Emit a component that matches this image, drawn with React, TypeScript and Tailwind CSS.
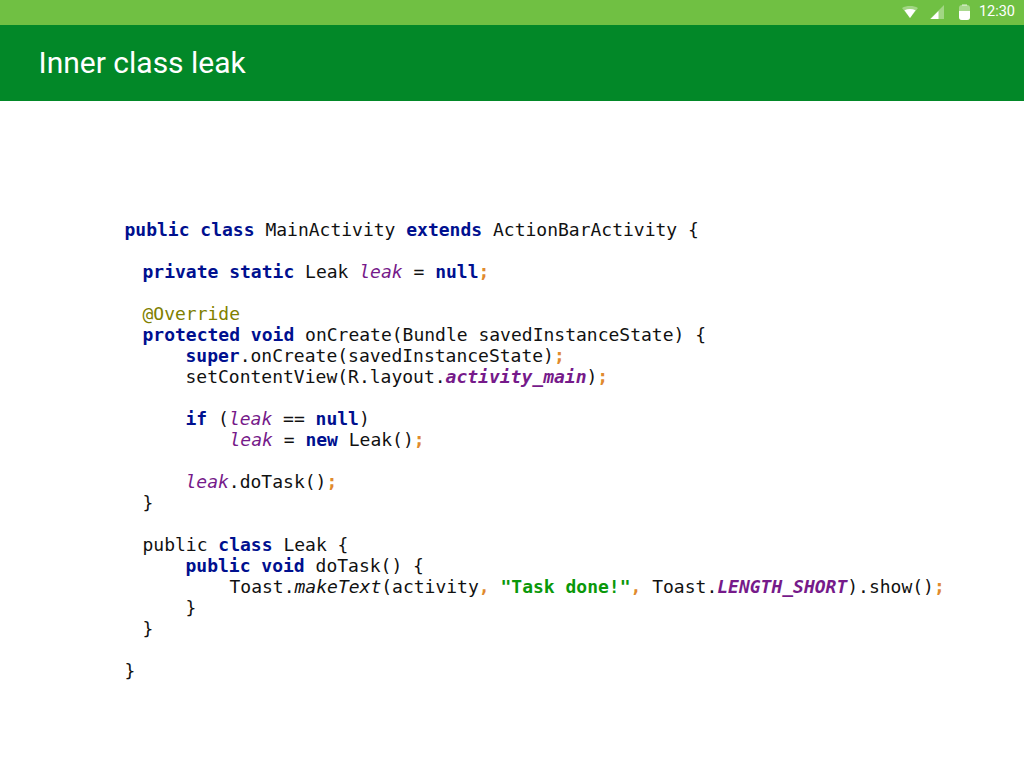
import React from "react";

type Kind = "k" | "p" | "f" | "fb" | "a" | "s" | "m" | "t";
type Seg = [string, Kind?];

const cls: Record<Kind, string> = {
  t: "text-[#111111]",
  k: "font-bold text-[#00108f]",
  p: "font-bold text-[#e08a2e]",
  f: "italic text-[#761a8a]",
  fb: "italic font-bold text-[#761a8a]",
  a: "text-[#808000]",
  s: "font-bold text-[#0a980a]",
  m: "italic text-[#111111]",
};

const lines: { indent: string; segs: Seg[] }[] = [
  { indent: "pl-0", segs: [["public class", "k"], [" MainActivity "], ["extends", "k"], [" ActionBarActivity {"]] },
  { indent: "pl-0", segs: [] },
  { indent: "pl-[18px]", segs: [["private static", "k"], [" Leak "], ["leak", "f"], [" = "], ["null", "k"], [";", "p"]] },
  { indent: "pl-0", segs: [] },
  { indent: "pl-[18px]", segs: [["@Override", "a"]] },
  { indent: "pl-[18px]", segs: [["protected void", "k"], [" onCreate(Bundle savedInstanceState) {"]] },
  { indent: "pl-[61px]", segs: [["super", "k"], [".onCreate(savedInstanceState)"], [";", "p"]] },
  { indent: "pl-[61px]", segs: [["setContentView(R.layout."], ["activity_main", "fb"], [")"], [";", "p"]] },
  { indent: "pl-0", segs: [] },
  { indent: "pl-[61px]", segs: [["if", "k"], [" ("], ["leak", "f"], [" == "], ["null", "k"], [")"]] },
  { indent: "pl-[105px]", segs: [["leak", "f"], [" = "], ["new", "k"], [" Leak()"], [";", "p"]] },
  { indent: "pl-0", segs: [] },
  { indent: "pl-[61px]", segs: [["leak", "f"], [".doTask()"], [";", "p"]] },
  { indent: "pl-[18px]", segs: [["}"]] },
  { indent: "pl-0", segs: [] },
  { indent: "pl-[18px]", segs: [["public "], ["class", "k"], [" Leak {"]] },
  { indent: "pl-[61px]", segs: [["public void", "k"], [" doTask() {"]] },
  { indent: "pl-[105px]", segs: [["Toast."], ["makeText", "m"], ["(activity"], [",", "p"], [" "], ['"Task done!"', "s"], [",", "p"], [" Toast."], ["LENGTH_SHORT", "fb"], [").show()"], [";", "p"]] },
  { indent: "pl-[61px]", segs: [["}"]] },
  { indent: "pl-[18px]", segs: [["}"]] },
  { indent: "pl-0", segs: [] },
  { indent: "pl-0", segs: [["}"]] },
];

export default function App() {
  return (
    <div className="w-[1024px] h-[768px] bg-white overflow-hidden flex flex-col">
      <div className="h-[25px] bg-[#70c043] flex items-center justify-end pr-[9px] text-white">
        <svg width="16" height="12" viewBox="0 0 16 12" className="mr-[12px] mt-[-2px]">
          <path d="M0 2C4.5 -0.6 11.5 -0.6 16 2L8 12Z" fill="#ffffff" fillOpacity="0.35" />
          <path d="M2.5 4.2C6 2.6 10 2.6 13.5 4.2L8 12Z" fill="#ffffff" />
        </svg>
        <svg width="14" height="14" viewBox="0 0 14 14" className="mr-[15px] mt-[-1px]">
          <path d="M14 0V14H0Z" fill="#ffffff" fillOpacity="0.35" />
          <path d="M8.5 6V14H0.5Z" fill="#ffffff" />
        </svg>
        <svg width="11" height="16" viewBox="0 0 11 16" className="mr-[9px] mt-[-2px]">
          <rect x="0" y="1" width="11" height="15" rx="3" fill="#ffffff" fillOpacity="0.4" />
          <rect x="3" y="0" width="5" height="2" fill="#ffffff" fillOpacity="0.4" />
          <path d="M0 7H11V13A3 3 0 0 1 8 16H3A3 3 0 0 1 0 13Z" fill="#ffffff" />
        </svg>
        <span className="font-['Roboto',sans-serif] text-[14.5px] leading-none">12:30</span>
      </div>
      <div className="h-[76px] bg-[#028828] flex items-center pl-[38.5px]">
        <span className="font-['Roboto',sans-serif] text-[30px] leading-none text-white">Inner class leak</span>
      </div>
      <div className="pt-[118px] pl-[124.5px] font-['DejaVu_Sans_Mono',monospace] text-[18px] leading-[21px] whitespace-pre">
        {lines.map((l, i) => (
          <div key={i} className={`h-[21px] ${l.indent}`}>
            {l.segs.map(([text, kind], j) => (
              <span key={j} className={cls[kind ?? "t"]}>{text}</span>
            ))}
          </div>
        ))}
      </div>
    </div>
  );
}
